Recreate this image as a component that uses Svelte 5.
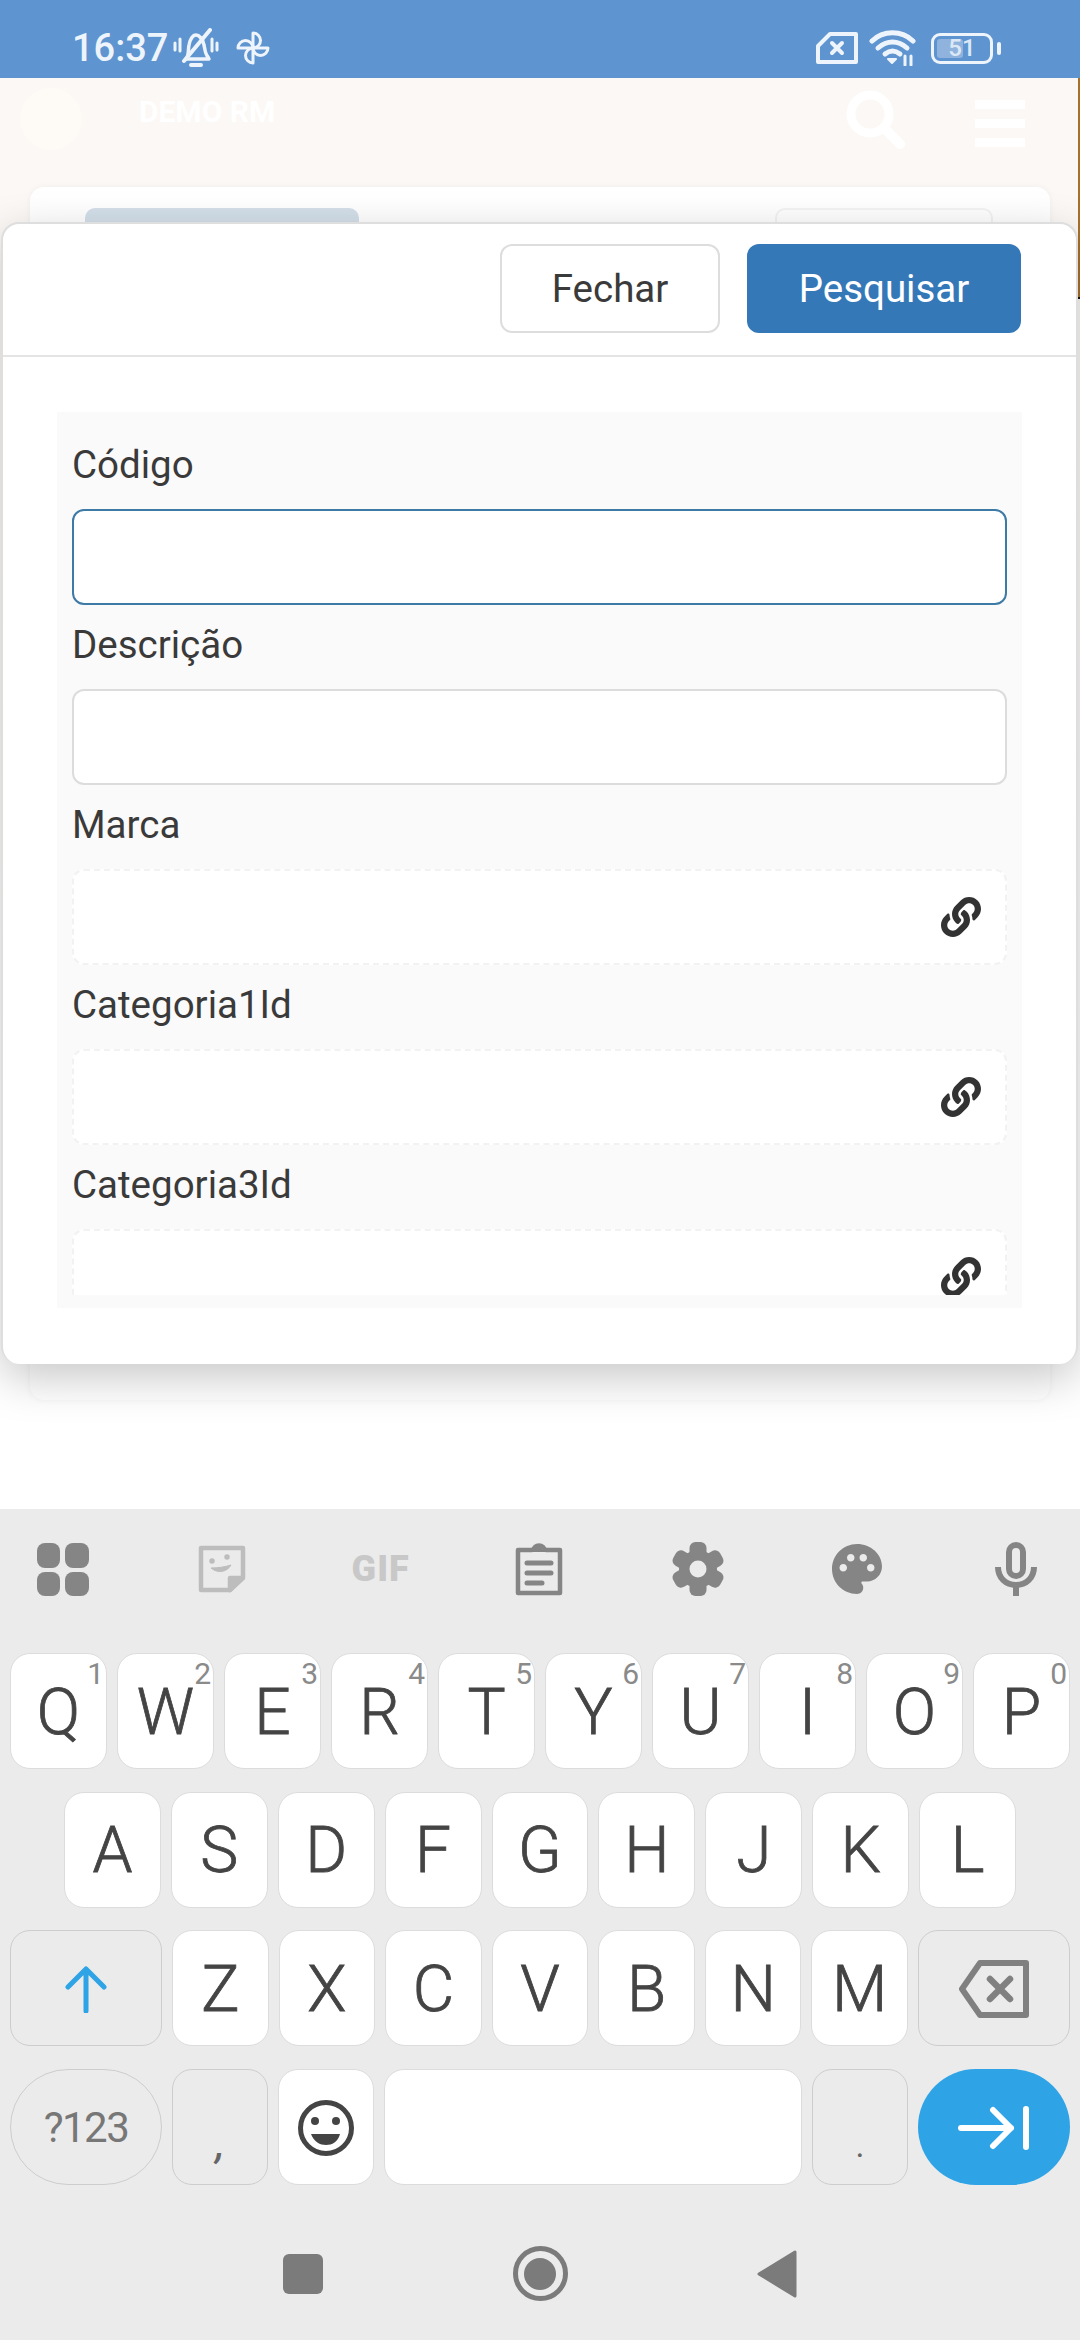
<script>
	const fields = [
		{ label: 'Código', kind: 'focus' },
		{ label: 'Descrição', kind: 'text' },
		{ label: 'Marca', kind: 'link' },
		{ label: 'Categoria1Id', kind: 'link' },
		{ label: 'Categoria3Id', kind: 'link' }
	]
	const topRow = [
		['Q', '1'], ['W', '2'], ['E', '3'], ['R', '4'], ['T', '5'],
		['Y', '6'], ['U', '7'], ['I', '8'], ['O', '9'], ['P', '0']
	]
	const midRow = ['A', 'S', 'D', 'F', 'G', 'H', 'J', 'K', 'L']
	const lowRow = ['Z', 'X', 'C', 'V', 'B', 'N', 'M']
	const linkPath =
		'M326.612 185.391c59.747 59.809 58.927 155.698.36 214.59-.11.12-.24.25-.36.37l-67.2 67.2c-59.27 59.27-155.699 59.262-214.96 0-59.27-59.26-59.27-155.7 0-214.96l37.106-37.106c9.84-9.84 26.786-3.3 27.294 10.606.648 17.722 3.826 35.527 9.69 52.721 1.986 5.822.567 12.262-3.783 16.612l-13.087 13.087c-28.026 28.026-28.905 73.66-1.155 101.96 28.024 28.579 74.086 28.749 102.325.51l67.2-67.19c28.191-28.191 28.073-73.757 0-101.83-3.701-3.694-7.429-6.564-10.341-8.569a16.037 16.037 0 0 1-6.947-12.606c-.396-10.567 3.348-21.456 11.698-29.806l21.054-21.055c5.521-5.521 14.182-6.199 20.584-1.731a152.482 152.482 0 0 1 20.522 17.197zM467.547 44.449c-59.261-59.262-155.69-59.27-214.96 0l-67.2 67.2c-.12.12-.25.25-.36.37-58.566 58.892-59.387 154.781.36 214.59a152.454 152.454 0 0 0 20.521 17.196c6.402 4.468 15.064 3.789 20.584-1.731l21.054-21.055c8.35-8.35 12.094-19.239 11.698-29.806a16.037 16.037 0 0 0-6.947-12.606c-2.912-2.005-6.64-4.875-10.341-8.569-28.073-28.073-28.191-73.639 0-101.83l67.2-67.19c28.239-28.239 74.3-28.069 102.325.51 27.75 28.3 26.872 73.934-1.155 101.96l-13.087 13.087c-4.35 4.35-5.769 10.79-3.783 16.612 5.864 17.194 9.042 34.999 9.69 52.721.509 13.906 17.454 20.446 27.294 10.606l37.106-37.106c59.271-59.259 59.271-155.699.001-214.959z'
	const gearAngles = [0, 60, 120, 180, 240, 300]
	const bladeAngles = [0, 90, 180, 270]
</script>

<div class="screen">
	<header class="status">
		<span class="time">16:37</span>
		<svg class="bell" width="46" height="40" viewBox="0 0 46 40" fill="none" stroke="#eef4fb" stroke-width="3.5" stroke-linecap="round">
			<path d="M13 31c3-3 2-9 3-14 1-6 4-10 7-10s7 4 8 10c1 4 1 9 4 12l1 2H13z" stroke-linejoin="round" />
			<path d="M18 37h10" stroke-width="4" />
			<path d="M11 33 37 2" stroke-width="4" />
			<path d="M2 15v7M7 11v12M39 11v12M44 15v7" stroke-width="3" />
		</svg>
		<svg class="fan" width="34" height="34" viewBox="0 0 34 34" fill="none" stroke="#eef4fb" stroke-width="3" stroke-linejoin="round">
			{#each bladeAngles as angle}
				<path d="M17 17V2a7.5 7.5 0 0 1 0 15z" transform="rotate({angle} 17 17)" />
			{/each}
		</svg>
		<span class="spacer"></span>
		<svg class="sim" width="42" height="32" viewBox="0 0 42 32" fill="none" stroke="#eef4fb" stroke-width="4" stroke-linejoin="round">
			<path d="M2 14 14 2h26v28H2z" />
			<path d="M16 11l10 10M26 11 16 21" stroke-linecap="round" stroke-width="4" />
		</svg>
		<svg class="wifi" width="47" height="36" viewBox="0 0 47 36" fill="none" stroke="#eef4fb" stroke-width="5" stroke-linecap="round">
			<path d="M3 11C14 0 33 0 44 11" />
			<path d="M9 18c9-8 20-8 29 0" />
			<path d="M16 24c5-4 10-4 15 0" />
			<path d="M19 29h8l-4 4z" fill="#eef4fb" stroke-width="2" stroke-linejoin="round" />
			<path d="M36 26v9M42 26v9" stroke-width="3" />
		</svg>
		<div class="battery">
			<span class="charge"></span>
			<span class="level">51</span>
		</div>
		<span class="nub"></span>
	</header>

	<main class="page">
		<div class="topbar">
			<span class="avatar"></span>
			<span class="brand">DEMO RM</span>
			<span class="spacer"></span>
			<svg class="search" width="60" height="60" viewBox="0 0 60 60" fill="none" stroke="#fff" stroke-linecap="round">
				<circle cx="24" cy="24" r="19" stroke-width="9" />
				<path d="M39 39 54 54" stroke-width="10" />
			</svg>
			<div class="burger"><span></span><span></span><span></span></div>
		</div>
		<section class="card">
			<div class="card-head">
				<span class="tag"></span>
				<span class="ghost"></span>
			</div>
		</section>
		<span class="edge"></span>

		<div class="modal">
			<div class="modal-head">
				<button class="btn">Fechar</button>
				<button class="btn primary">Pesquisar</button>
			</div>
			<div class="modal-body">
				<div class="panel">
					<div class="fields">
						{#each fields as field}
							<label class="name" for={field.label}>{field.label}</label>
							{#if field.kind === 'link'}
								<div class="lookup">
									<svg width="40" height="40" viewBox="0 0 512 512"><path fill="#333" d={linkPath} /></svg>
								</div>
							{:else}
								<input id={field.label} class="input" class:focus={field.kind === 'focus'} />
							{/if}
						{/each}
					</div>
				</div>
			</div>
		</div>
	</main>

	<footer class="keyboard">
		<div class="tools">
			<span class="tool">
				<svg width="54" height="54" viewBox="0 0 54 54" fill="#858585">
					<rect x="1" y="1" width="23" height="25" rx="8" /><rect x="29" y="1" width="24" height="25" rx="8" />
					<rect x="1" y="30" width="23" height="24" rx="8" /><rect x="29" y="30" width="24" height="24" rx="8" />
				</svg>
			</span>
			<span class="tool">
				<svg width="48" height="48" viewBox="0 0 48 48" fill="none" stroke="#bdbdbd" stroke-width="4.5" stroke-linejoin="round">
					<path d="M3 3h42v29L32 45H3z" />
					<path d="M32 45V33h13z" fill="#bdbdbd" />
					<path d="M13 23c7 6 16 4 20-3-6 2-13 3-20 3z" fill="#bdbdbd" stroke-width="1" />
					<circle cx="14" cy="16" r="2" fill="#bdbdbd" stroke-width="1.5" />
					<circle cx="29" cy="12" r="2" fill="#bdbdbd" stroke-width="1.5" />
				</svg>
			</span>
			<span class="tool gif">GIF</span>
			<span class="tool">
				<svg width="48" height="54" viewBox="0 0 48 54" fill="none" stroke="#858585" stroke-width="4.5" stroke-linecap="round" stroke-linejoin="round">
					<path d="M17 8H3v43h42V8H31" />
					<path d="M17 9c0-9 14-9 14 0z" fill="#858585" stroke-width="2" />
					<path d="M12 21h24M12 31h24M12 41h15" stroke-width="5" />
				</svg>
			</span>
			<span class="tool">
				<svg width="52" height="54" viewBox="-26 -27 52 54" fill="#858585">
					<circle r="19" />
					{#each gearAngles as angle}
						<rect x="-8.5" y="-27" width="17" height="16" rx="6" transform="rotate({angle})" />
					{/each}
					<circle r="8.5" fill="#ebebeb" />
				</svg>
			</span>
			<span class="tool">
				<svg width="60" height="60" viewBox="0 0 24 24" fill="#858585">
					<path d="M12 2C6.49 2 2 6.49 2 12s4.49 10 10 10c1.38 0 2.5-1.12 2.5-2.5 0-.61-.23-1.2-.64-1.67-.08-.1-.13-.21-.13-.33 0-.28.22-.5.5-.5H16c3.31 0 6-2.69 6-6 0-4.96-4.49-9-10-9zm-5.5 11c-.83 0-1.5-.67-1.5-1.5S5.67 10 6.5 10s1.5.67 1.5 1.5S7.33 13 6.5 13zm3-4C8.67 9 8 8.33 8 7.5S8.67 6 9.5 6s1.5.67 1.5 1.5S10.33 9 9.5 9zm5 0c-.83 0-1.5-.67-1.5-1.5S13.67 6 14.5 6s1.5.67 1.5 1.5S15.33 9 14.5 9zm3 4c-.83 0-1.5-.67-1.5-1.5s.67-1.5 1.5-1.5 1.5.67 1.5 1.5-.67 1.5-1.5 1.5z" />
				</svg>
			</span>
			<span class="tool">
				<svg width="42" height="54" viewBox="0 0 42 54" fill="none" stroke="#858585" stroke-width="6">
					<rect x="14" y="3" width="14" height="31" rx="7" />
					<path d="M3 25c0 11 8 18 18 18s18-7 18-18" />
					<path d="M21 43v11" stroke-width="6" />
				</svg>
			</span>
		</div>

		<div class="rows">
			<div class="row">
				{#each topRow as [letter, hint]}
					<span class="key">{letter}<small>{hint}</small></span>
				{/each}
			</div>
			<div class="row mid">
				{#each midRow as letter}
					<span class="key">{letter}</span>
				{/each}
			</div>
			<div class="row">
				<span class="key fn wide">
					<svg width="42" height="48" viewBox="0 0 42 48" fill="none" stroke="#2ea3e6" stroke-width="5" stroke-linecap="round" stroke-linejoin="round">
						<path d="M21 46V4M3 22 21 4l18 18" />
					</svg>
				</span>
				{#each lowRow as letter}
					<span class="key">{letter}</span>
				{/each}
				<span class="key fn wide">
					<svg width="70" height="58" viewBox="0 0 70 58" fill="none" stroke="#808080" stroke-width="6" stroke-linejoin="round" stroke-linecap="round">
						<path d="M3 29 21 3h46v52H21z" />
						<path d="M31 19l20 20M51 19 31 39" stroke-width="6.5" />
					</svg>
				</span>
			</div>
			<div class="row">
				<span class="key fn wide pill sym">?123</span>
				<span class="key fn mark comma">,</span>
				<span class="key">
					<svg width="58" height="58" viewBox="0 0 58 58" fill="none" stroke="#444" stroke-width="5">
						<circle cx="29" cy="29" r="25.5" />
						<circle cx="18" cy="22" r="4" fill="#444" stroke="none" />
						<circle cx="39" cy="22" r="4" fill="#444" stroke="none" />
						<path d="M14 35h29c-2 8-8 11-14 11s-12-3-15-11z" fill="#444" stroke="none" />
					</svg>
				</span>
				<span class="key space"></span>
				<span class="key fn mark">.</span>
				<span class="key fn wide pill enter">
					<svg width="72" height="44" viewBox="0 0 72 44" fill="none" stroke="#fff" stroke-width="6" stroke-linecap="round" stroke-linejoin="round">
						<path d="M3 22h50M35 4l18 18-18 18" />
						<path d="M68 3v38" />
					</svg>
				</span>
			</div>
		</div>

		<nav class="nav">
			<span class="nav-cell"><span class="square"></span></span>
			<span class="nav-cell"><span class="home"><span></span></span></span>
			<span class="nav-cell">
				<svg width="40" height="48" viewBox="0 0 40 48" fill="#7b7b7b" stroke="#7b7b7b" stroke-width="3" stroke-linejoin="round">
					<path d="M2 24 38 2v44z" />
				</svg>
			</span>
		</nav>
	</footer>
</div>

<style>
	:global(body) {
		font-family: Roboto, 'Liberation Sans', sans-serif;
		background: #fff;
	}
	.screen {
		width: 1080px;
		height: 2340px;
		display: flex;
		flex-direction: column;
		overflow: hidden;
	}
	.spacer {
		flex: 1;
	}

	.status {
		height: 78px;
		flex: none;
		background: #5e94cf;
		color: #eef4fb;
		display: flex;
		align-items: center;
		padding: 18px 79px 0 72px;
		box-sizing: border-box;
	}
	.time {
		font-size: 38px;
		font-weight: 500;
		margin-right: 5px;
	}
	.fan {
		margin-left: 17px;
	}
	.wifi {
		margin-left: 11px;
	}
	.battery {
		position: relative;
		margin-left: 15px;
		width: 62px;
		height: 31px;
		box-sizing: border-box;
		border: 3px solid #eef4fb;
		border-radius: 9px;
		display: flex;
		align-items: center;
		justify-content: center;
	}
	.charge {
		position: absolute;
		left: 3px;
		top: 3px;
		bottom: 3px;
		width: 26px;
		border-radius: 3px;
		background: #8fb3dc;
	}
	.level {
		position: relative;
		font-size: 24px;
		font-weight: 500;
		color: #dce8f5;
	}
	.nub {
		width: 4px;
		height: 13px;
		margin-left: 4px;
		background: #eef4fb;
		border-radius: 2px;
	}

	.page {
		position: relative;
		height: 1431px;
		flex: none;
		background: linear-gradient(#fcf8f5 0, #fcf8f5 320px, #fff 1000px);
	}
	.topbar {
		height: 109px;
		box-sizing: border-box;
		display: flex;
		align-items: flex-start;
		padding: 10px 55px 0 20px;
	}
	.avatar {
		width: 62px;
		height: 62px;
		border-radius: 50%;
		background: #fefaf6;
	}
	.brand {
		margin: 6px 0 0 57px;
		font-size: 30px;
		font-weight: 700;
		color: #fff;
	}
	.search {
		margin-right: 69px;
		margin-top: 2px;
	}
	.burger {
		display: flex;
		flex-direction: column;
		gap: 10px;
		padding-top: 12px;
	}
	.burger span {
		display: block;
		width: 50px;
		height: 9px;
		background: #fff;
	}
	.card {
		margin: 0 30px;
		height: 1213px;
		background: #fff;
		border-radius: 14px;
		box-shadow: 0 0 6px rgba(0, 0, 0, 0.05);
	}
	.card-head {
		display: flex;
		justify-content: space-between;
		padding: 21px 57px 0 55px;
	}
	.tag {
		width: 274px;
		height: 40px;
		border-radius: 10px;
		background: #d3dfe9;
	}
	.ghost {
		width: 218px;
		height: 40px;
		border-radius: 10px;
		border: 2px solid #f3f3f3;
		box-sizing: border-box;
	}
	.edge {
		position: absolute;
		right: 0;
		top: 0;
		width: 2px;
		height: 219px;
		background: #a9702a;
		border-bottom: 2px solid #111;
	}

	.modal {
		position: absolute;
		left: 1px;
		top: 144px;
		width: 1077px;
		height: 1142px;
		box-sizing: border-box;
		background: #fff;
		border: 2px solid #dedede;
		border-bottom: none;
		border-radius: 18px;
		box-shadow: 0 14px 45px rgba(0, 0, 0, 0.22);
	}
	.modal-head {
		height: 133px;
		box-sizing: border-box;
		border-bottom: 2px solid #e4e4e4;
		display: flex;
		justify-content: flex-end;
		gap: 27px;
		padding: 20px 55px 0 0;
	}
	.btn {
		height: 89px;
		width: 220px;
		border: 2px solid #ddd;
		border-radius: 12px;
		background: #fff;
		color: #3a3a3a;
		font: 400 38.5px Roboto, sans-serif;
	}
	.primary {
		width: 274px;
		background: #3578b8;
		border: none;
		color: #fff;
	}
	.modal-body {
		padding: 55px 54px 0 54px;
	}
	.panel {
		background: #fafafa;
		padding: 13px 15px;
	}
	.fields {
		height: 870px;
		overflow: hidden;
		display: flex;
		flex-direction: column;
	}
	.name {
		height: 84px;
		flex: none;
		box-sizing: border-box;
		line-height: 80px;
		font-size: 38.5px;
		color: #3a3a3a;
	}
	.input,
	.lookup {
		height: 96px;
		flex: none;
		box-sizing: border-box;
		border: 2px solid #dcdcdc;
		border-radius: 12px;
		background: #fff;
		outline: none;
		padding: 0;
	}
	.input.focus {
		border-color: #3d7aa6;
	}
	.lookup {
		border: 2px dashed #f2f2f2;
		display: flex;
		align-items: center;
		justify-content: flex-end;
		padding-right: 24px;
	}

	.keyboard {
		flex: 1;
		background: #ebebeb;
		display: flex;
		flex-direction: column;
	}
	.tools {
		height: 144px;
		flex: none;
		box-sizing: border-box;
		display: flex;
		justify-content: space-between;
		padding: 30px 34px 0 33px;
	}
	.tool {
		width: 60px;
		height: 60px;
		display: flex;
		align-items: center;
		justify-content: center;
	}
	.gif {
		font-size: 36px;
		font-weight: 900;
		color: #c8c8c8;
		letter-spacing: 1px;
	}
	.rows {
		display: flex;
		flex-direction: column;
		gap: 22.5px;
		padding: 0 10px;
	}
	.row {
		display: flex;
		gap: 10px;
		height: 116px;
	}
	.mid {
		padding: 0 54px;
	}
	.key {
		position: relative;
		flex: 1 1 0;
		box-sizing: border-box;
		display: flex;
		align-items: center;
		justify-content: center;
		background: #fff;
		border: 1.5px solid #dcdcdc;
		border-radius: 20px;
		color: #444;
		font-size: 64px;
		font-weight: 300;
		-webkit-text-stroke: 0.8px #444;
		padding-top: 2px;
	}
	.key small {
		position: absolute;
		top: 2px;
		right: 2px;
		font-size: 30px;
		font-weight: 400;
		color: #8a8a8a;
		-webkit-text-stroke: 0;
	}
	.fn {
		background: #ebebeb;
		border-color: #cdcdcd;
	}
	.wide {
		flex: none;
		width: 152px;
	}
	.pill {
		border-radius: 58px;
	}
	.sym {
		font-size: 42px;
		font-weight: 400;
		color: #777;
		letter-spacing: -1.5px;
		-webkit-text-stroke: 0;
	}
	.mark {
		font-size: 34px;
		font-weight: 400;
		color: #666;
		padding-top: 36px;
		-webkit-text-stroke: 0;
	}
	.comma {
		font-size: 40px;
		font-style: italic;
		font-weight: 500;
	}
	.space {
		flex: none;
		width: 418px;
	}
	.enter {
		background: #2ea3e6;
		border: none;
	}

	.nav {
		flex: 1;
		display: flex;
		align-items: center;
		justify-content: center;
		gap: 177px;
		padding-top: 23px;
	}
	.nav-cell {
		width: 60px;
		display: flex;
		justify-content: center;
	}
	.square {
		width: 40px;
		height: 40px;
		border-radius: 6px;
		background: #7b7b7b;
	}
	.home {
		width: 55px;
		height: 55px;
		box-sizing: border-box;
		border: 5px solid #7b7b7b;
		border-radius: 50%;
		display: flex;
		align-items: center;
		justify-content: center;
	}
	.home span {
		width: 32px;
		height: 32px;
		border-radius: 50%;
		background: #7b7b7b;
	}
</style>
